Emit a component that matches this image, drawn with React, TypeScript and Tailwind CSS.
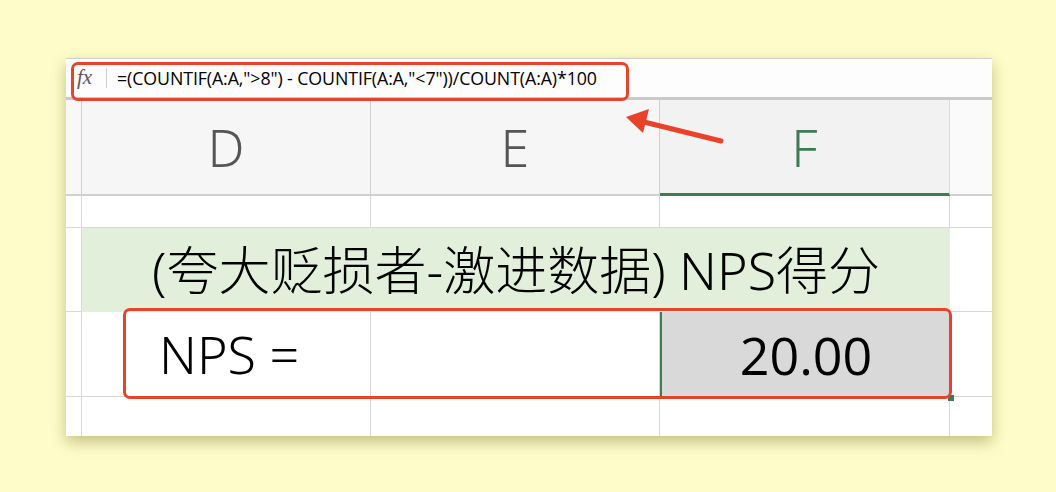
import React from "react";

const cjk = "font-['Noto_Sans','Noto_Sans_CJK_SC',sans-serif]";

const App: React.FC = () => {
  return (
    <div className="relative w-[1056px] h-[492px] bg-[#fefcc8] overflow-hidden pt-[58px] pl-[66px]">
      {/* sheet card */}
      <div className="w-[926px] h-[378px] bg-white shadow-[0_6px_14px_rgba(90,80,0,0.35)] flex flex-col">
        {/* formula bar */}
        <div className="h-[42px] border-t border-[#cfcfcf] border-b-[3px] border-b-[#c9c9c9] flex items-center bg-[#fdfdfd]">
          <span className="w-[40px] pl-[11px] font-['Liberation_Serif',serif] italic text-[21px] text-[#5a5a5a]">fx</span>
          <span className="h-[20px] w-px bg-[#cfcfcf]" />
          <span className="pl-[10px] font-['Open_Sans',sans-serif] text-[17.8px] text-black tracking-[-0.1px]">
            =(COUNTIF(A:A,"&gt;8") - COUNTIF(A:A,"&lt;7"))/COUNT(A:A)*100
          </span>
        </div>

        {/* grid */}
        <div className="grid grid-cols-[16px_289px_289px_290px_42px] grid-rows-[96px_32px_84px_85px_39px] flex-1">
          {/* header row */}
          <div className="bg-[#f8f8f8] border-r border-b-2 border-[#d0d0d0]" />
          <div className={`bg-[#f6f6f6] border-r border-b-2 border-[#d0d0d0] flex items-center justify-center text-[52px] font-light text-[#555] ${cjk}`}>D</div>
          <div className={`bg-[#f6f6f6] border-r border-b-2 border-[#d0d0d0] flex items-center justify-center text-[52px] font-light text-[#555] ${cjk}`}>E</div>
          <div className={`bg-[#f2f2f2] border-r border-[#d8d8d8] border-b-[3px] border-b-[#3f7a52] flex items-center justify-center text-[52px] font-light text-[#3f7a52] ${cjk}`}>F</div>
          <div className="bg-[#fafafa] border-b-2 border-[#d0d0d0]" />

          {/* row 1 */}
          <div className="border-r border-b border-[#d8d8d8]" />
          <div className="border-r border-b border-[#d8d8d8]" />
          <div className="border-r border-b border-[#d8d8d8]" />
          <div className="border-r border-b border-[#d8d8d8]" />
          <div className="border-b border-[#d8d8d8]" />

          {/* row 2 – title */}
          <div className="border-r border-b border-[#d8d8d8]" />
          <div className={`col-span-3 bg-[#e2efda] flex items-center justify-center text-[52px] font-light text-black ${cjk}`}>
            (夸大贬损者-激进数据) NPS得分
          </div>
          <div className="border-b border-[#d8d8d8]" />

          {/* row 3 */}
          <div className="border-r border-b border-[#d8d8d8]" />
          <div className={`border-r border-b border-[#d8d8d8] flex items-center pl-[77px] text-[52px] font-light text-black ${cjk}`}>NPS =</div>
          <div className="border-r border-b border-[#d8d8d8]" />
          <div className="relative border-l-2 border-[#3f7a52] bg-[#d9d9d9] flex items-center justify-center text-[52px] text-black font-['Open_Sans',sans-serif]">
            20.00
            <span className="absolute right-[-4px] bottom-[-4px] w-[6px] h-[6px] bg-[#3f7a52]" />
          </div>
          <div className="border-b border-[#d8d8d8]" />

          {/* row 4 */}
          <div className="border-r border-[#d8d8d8]" />
          <div className="border-r border-[#d8d8d8]" />
          <div className="border-r border-[#d8d8d8]" />
          <div className="border-r border-[#d8d8d8]" />
          <div />
        </div>
      </div>

      {/* annotations */}
      <div className="absolute left-[71px] top-[62px] w-[558px] h-[39px] border-[3px] border-[#e8432a] rounded-[7px]" />
      <div className="absolute left-[123px] top-[308px] w-[829px] h-[91px] border-[3px] border-[#e8432a] rounded-[7px]" />
      <svg className="absolute left-0 top-0" width="1056" height="492" viewBox="0 0 1056 492">
        <line x1="721" y1="141" x2="640" y2="121" stroke="#e8432a" strokeWidth="5" strokeLinecap="round" />
        <polygon points="626,117 649,109 643,133" fill="#e8432a" />
      </svg>
    </div>
  );
};

export default App;
